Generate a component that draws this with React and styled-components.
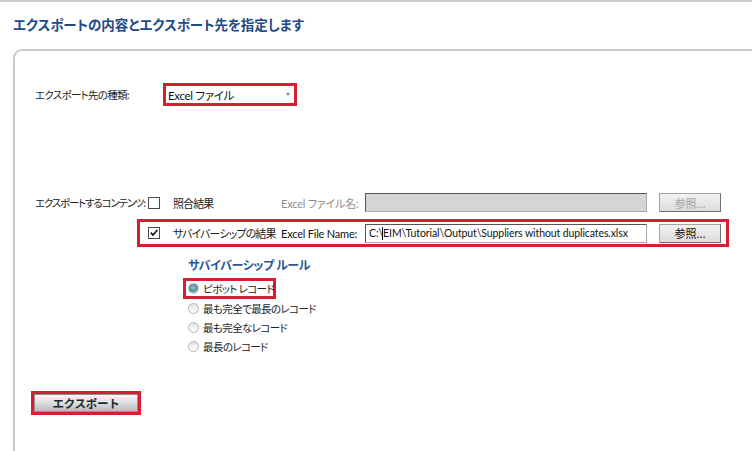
import React from 'react';
import styled, { createGlobalStyle } from 'styled-components';

const GlobalStyle = createGlobalStyle`
  html, body {
    margin: 0;
    padding: 0;
    background: #ffffff;
  }
  body {
    font-family: 'Lato', 'Noto Sans CJK JP', sans-serif;
    font-feature-settings: 'palt';
    color: #222222;
  }
`;

const ruleOptions = [
  { label: 'ピボット レコード', selected: true },
  { label: '最も完全で最長のレコード' },
  { label: '最も完全なレコード' },
  { label: '最長のレコード' },
];

const App = () => {
  return (
    <Page>
      <GlobalStyle />
      <Header>
        <Title>エクスポートの内容とエクスポート先を指定します</Title>
      </Header>
      <Panel>
        {/* 出力先の種類 */}
        <TypeRow>
          <TypeLabel>エクスポート先の種類:</TypeLabel>
          <RedFrame>
            <Select>
              <span>Excel ファイル</span>
              <Arrow />
            </Select>
          </RedFrame>
        </TypeRow>

        {/* コンテンツ行 */}
        <ContentRow>
          <ContentLabel>エクスポートするコンテンツ:</ContentLabel>
          <CheckCell>
            <CheckBox />
          </CheckCell>
          <NameCell>照合結果</NameCell>
          <FileLabel disabled>Excel ファイル名:</FileLabel>
          <TextBox disabled />
          <BrowseButton disabled>参照...</BrowseButton>
        </ContentRow>

        <HighlightRow>
          <CheckCell>
            <CheckBox>
              <svg width="10" height="10" viewBox="0 0 10 10">
                <path
                  d="M1.8 4.6 L4 7 L8.4 2"
                  fill="none"
                  stroke="#111"
                  strokeWidth="1.6"
                />
              </svg>
            </CheckBox>
          </CheckCell>
          <NameCell>サバイバーシップの結果</NameCell>
          <FileLabel>Excel File Name:</FileLabel>
          <TextBox>
            C:\<Caret />EIM\Tutorial\Output\Suppliers without duplicates.xlsx
          </TextBox>
          <BrowseButton>参照...</BrowseButton>
        </HighlightRow>

        {/* サバイバーシップ ルール */}
        <RuleSection>
          <RuleTitle>サバイバーシップ ルール</RuleTitle>
          {ruleOptions.map(option =>
            option.selected ? (
              <RadioFrame key={option.label}>
                <RadioRow>
                  <Radio selected />
                  {option.label}
                </RadioRow>
              </RadioFrame>
            ) : (
              <RadioRow key={option.label} indent>
                <Radio />
                {option.label}
              </RadioRow>
            )
          )}
        </RuleSection>

        <ExportFrame>
          <ExportButton>エクスポート</ExportButton>
        </ExportFrame>
      </Panel>
    </Page>
  );
};

const Page = styled.div`
  display: flex;
  flex-direction: column;
  width: 752px;
  height: 451px;
  overflow: hidden;
  border-top: 2px solid #cdcdcd;
  box-sizing: border-box;
`;

const Header = styled.div`
  height: 47px;
  padding: 12px 0 0 13px;
  box-sizing: border-box;
`;

const Title = styled.h1`
  margin: 0;
  font-family: 'Noto Sans CJK JP', sans-serif;
  font-size: 13.5px;
  line-height: 20px;
  font-weight: 700;
  color: #1f4a86;
  letter-spacing: 0;
`;

const Panel = styled.div`
  flex: 1;
  display: flex;
  flex-direction: column;
  align-items: flex-start;
  margin-left: 13px;
  padding-left: 20px;
  border-top: 2px solid #c9c9c9;
  border-left: 2px solid #c9c9c9;
  border-top-left-radius: 9px;
  font-size: 11px;
`;

const TypeRow = styled.div`
  display: flex;
  align-items: center;
  height: 23px;
  margin-top: 32px;
`;

const TypeLabel = styled.div`
  flex-shrink: 0;
  width: 128px;
  font-family: 'Noto Sans CJK JP', sans-serif;
  font-size: 10.5px;
  letter-spacing: -0.7px;
  white-space: nowrap;
`;

const RedFrame = styled.div`
  display: flex;
  border: 3px solid #d42030;
  box-sizing: border-box;
`;

const Select = styled.div`
  display: flex;
  align-items: center;
  justify-content: space-between;
  width: 128px;
  height: 17px;
  padding: 0 4px 0 2px;
  box-sizing: border-box;
  background: #ffffff;
  font-size: 11.5px;
  letter-spacing: -0.3px;
  color: #111111;
`;

const Arrow = styled.span`
  width: 0;
  height: 0;
  border-left: 2.5px solid transparent;
  border-right: 2.5px solid transparent;
  border-top: 3px solid #888888;
`;

const ContentRow = styled.div`
  display: flex;
  align-items: center;
  height: 19px;
  margin-top: 87px;
`;

const ContentLabel = styled.div`
  flex-shrink: 0;
  width: 113px;
  font-family: 'Noto Sans CJK JP', sans-serif;
  font-size: 10.5px;
  letter-spacing: -1.2px;
  white-space: nowrap;
`;

const HighlightRow = styled.div`
  display: flex;
  align-items: center;
  height: 28px;
  margin: 7px 0 0 102px;
  padding: 0 5px 0 8px;
  border: 3px solid #d42030;
  box-sizing: border-box;
`;

const CheckCell = styled.div`
  flex-shrink: 0;
  display: flex;
  align-items: center;
  width: 25px;
`;

const CheckBox = styled.span`
  display: flex;
  align-items: center;
  justify-content: center;
  width: 12px;
  height: 12px;
  border: 1px solid #4a4a4a;
  box-sizing: border-box;
  background: #ffffff;
`;

const NameCell = styled.div`
  flex-shrink: 0;
  width: 108px;
  font-family: 'Noto Sans CJK JP', sans-serif;
  font-size: 11px;
  letter-spacing: -0.9px;
  white-space: nowrap;
`;

const FileLabel = styled.div`
  flex-shrink: 0;
  width: 84px;
  white-space: nowrap;
  font-size: 11px;
  letter-spacing: -0.2px;
  color: ${props => (props.disabled ? '#8c8c8c' : '#111111')};
`;

const TextBox = styled.div`
  flex-shrink: 0;
  display: flex;
  align-items: center;
  width: 282px;
  height: 19px;
  padding: 0 3px;
  box-sizing: border-box;
  border: 1px solid #a9a9a9;
  border-top-color: #555555;
  border-left-color: #555555;
  background: ${props => (props.disabled ? '#d5d5d5' : '#ffffff')};
  font-size: 10.5px;
  letter-spacing: -0.1px;
  color: #111111;
  white-space: nowrap;
  overflow: hidden;
`;

const Caret = styled.span`
  display: inline-block;
  width: 1px;
  height: 13px;
  margin: 0 0 0 -1px;
  background: #111111;
`;

const BrowseButton = styled.button`
  flex-shrink: 0;
  width: 62px;
  height: 19px;
  margin-left: 12px;
  padding: 0;
  border: 1px solid #a4a4a4;
  border-right-color: #6e6e6e;
  border-bottom-color: #6e6e6e;
  background: linear-gradient(#f2f2f2, #dcdcdc);
  font-family: 'Noto Sans CJK JP', sans-serif;
  font-size: 11px;
  color: ${props => (props.disabled ? '#a3a3a3' : '#111111')};
`;

const RuleSection = styled.div`
  display: flex;
  flex-direction: column;
  align-items: flex-start;
  margin: 10px 0 0 148px;
`;

const RuleTitle = styled.div`
  margin: 0 0 5px 5px;
  font-family: 'Noto Sans CJK JP', sans-serif;
  font-size: 12px;
  line-height: 16px;
  font-weight: 700;
  letter-spacing: -0.4px;
  color: #2a5796;
`;

const RadioFrame = styled.div`
  display: flex;
  width: 93px;
  height: 21px;
  padding-left: 2px;
  border: 3px solid #d42030;
  box-sizing: border-box;
`;

const RadioRow = styled.div`
  display: flex;
  align-items: center;
  gap: 4px;
  height: ${props => (props.indent ? '19px' : '15px')};
  padding-left: ${props => (props.indent ? '5px' : '0')};
  font-family: 'Noto Sans CJK JP', sans-serif;
  font-size: 10.5px;
  letter-spacing: -0.6px;
  white-space: nowrap;
`;

const Radio = styled.span`
  flex-shrink: 0;
  width: 11px;
  height: 11px;
  border-radius: 50%;
  border: 1px solid #b4b4b4;
  box-sizing: border-box;
  background: ${props =>
    props.selected
      ? 'radial-gradient(circle at 45% 40%, #9cc6cc 0, #4f8b99 55%, #d8e4e6 75%)'
      : 'linear-gradient(#e4e4e4, #ffffff)'};
`;

const ExportFrame = styled.div`
  display: flex;
  margin: 35px 0 0 -4px;
  border: 3px solid #d42030;
`;

const ExportButton = styled.button`
  width: 104px;
  height: 18px;
  padding: 0;
  border: 1px solid #8e9294;
  background: linear-gradient(#f7f7f7, #d9dbdc 55%, #b7bbbd);
  font-family: 'Noto Sans CJK JP', sans-serif;
  font-size: 11.5px;
  font-weight: 700;
  letter-spacing: -0.3px;
  color: #1d2a2e;
`;

export default App;
